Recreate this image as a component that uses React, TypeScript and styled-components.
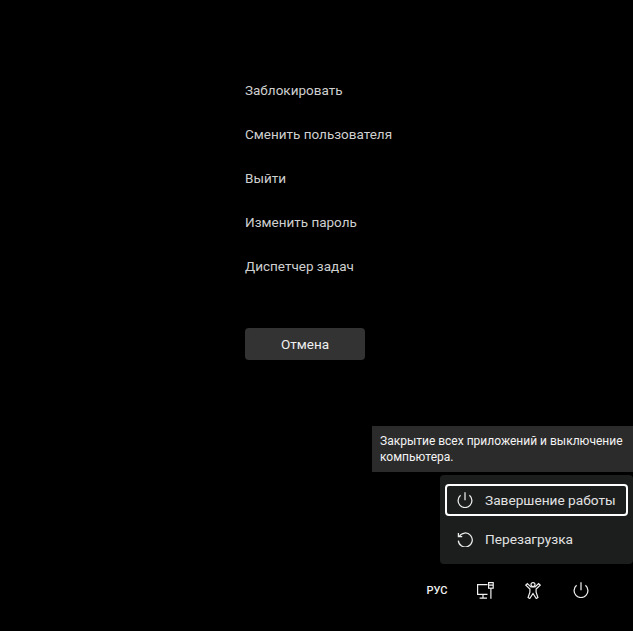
import React from 'react';
import styled, { createGlobalStyle } from 'styled-components';

const GlobalStyle = createGlobalStyle`
  html, body {
    margin: 0;
    padding: 0;
    background: #000;
  }
  body {
    font-family: Roboto, 'Open Sans', sans-serif;
    overflow: hidden;
  }
`;

const PowerIcon = () => (
  <svg width="16" height="16" viewBox="0 0 16 16" fill="none" stroke="#ececec" strokeWidth="1.25">
    <path d="M8 .3v7.9" />
    <path d="M3.6 3.3A6.9 6.9 0 1 0 12.4 3.3" />
  </svg>
);

const RestartIcon = () => (
  <svg width="16" height="16" viewBox="0 0 16 16" fill="none" stroke="#ececec" strokeWidth="1.25">
    <path d="M2.2 5.5A7 7 0 1 1 1.3 9.6" />
    <path d="M1.4 2V5.7H5.2" />
  </svg>
);

const NetworkIcon = () => (
  <svg width="17" height="17" viewBox="0 0 17 17" fill="none" stroke="#f0f0f0" strokeWidth="1.2">
    <path d="M10.5 2.6H.6v9.8h9.9" />
    <path d="M6 12.4v3.4M2.6 16.2H10" />
    <rect x="11.6" y=".6" width="4.6" height="5.6" />
    <path d="M11.6 3.2h4.6M13.9 6.2v10.6" />
  </svg>
);

const AccessibilityIcon = () => (
  <svg width="16" height="17" viewBox="0 0 16 17" fill="none" stroke="#f0f0f0" strokeWidth="1.2">
    <circle cx="8" cy="2.6" r="2" />
    <path d="M2.4 1.6 5.9 4.9H10.1L13.6 1.6 15.2 3.1 11.1 7.1V10.1L12.9 15.5 11.3 16.5 8 11.5 4.7 16.5 3.1 15.5 4.9 10.1V7.1L.8 3.1Z" />
  </svg>
);

const Page = styled.div`
  position: relative;
  display: flex;
  flex-direction: column;
  height: 100vh;
  background: #000;
`;

const Main = styled.main`
  flex: 1;
  display: flex;
  flex-direction: column;
  align-items: flex-start;
  padding: 68px 0 0 245px;
`;

const OptionItem = styled.a`
  display: flex;
  align-items: center;
  height: 44px;
  font-size: 13.5px;
  color: #cfcfcf;
`;

const CancelButton = styled.button`
  width: 120px;
  height: 32px;
  margin-top: 40px;
  padding: 0;
  border: 0;
  border-radius: 4px;
  background: #333;
  color: #f0f0f0;
  font: inherit;
  font-size: 13.5px;
`;

const Tray = styled.footer`
  display: flex;
  justify-content: flex-end;
  padding: 0 28px 17px 0;
`;

const TrayItem = styled.div`
  display: flex;
  align-items: center;
  justify-content: center;
  width: 48px;
  height: 48px;
`;

const Lang = styled.span`
  font-size: 11px;
  font-weight: 500;
  color: #f0f0f0;
`;

const PowerOverlay = styled.div`
  position: absolute;
  right: 0;
  bottom: 67px;
  display: flex;
  flex-direction: column;
  align-items: flex-end;
  gap: 3px;
`;

const Tooltip = styled.div`
  box-sizing: border-box;
  width: 261px;
  height: 46px;
  padding: 7px 8px;
  background: #2b2b2b;
  font-size: 12px;
  line-height: 16px;
  color: #f4f4f4;
`;

const Flyout = styled.div`
  box-sizing: border-box;
  display: flex;
  flex-direction: column;
  gap: 7px;
  width: 193px;
  height: 89px;
  padding: 9px 5px;
  border-radius: 4px;
  background: #1b1e1d;
`;

const FlyoutItem = styled.div<{ $focused?: boolean }>`
  box-sizing: border-box;
  display: flex;
  align-items: center;
  gap: 12px;
  height: 32px;
  padding-left: 10px;
  border: 2px solid ${(p) => (p.$focused ? '#fff' : 'transparent')};
  border-radius: 4px;
  font-size: 13.7px;
  color: #e2e2e2;
`;

const options = [
  'Заблокировать',
  'Сменить пользователя',
  'Выйти',
  'Изменить пароль',
  'Диспетчер задач',
];

const App = () => {
  return (
    <Page>
      <GlobalStyle />
      <Main>
        {options.map((o) => (
          <OptionItem key={o}>{o}</OptionItem>
        ))}
        <CancelButton type="button">Отмена</CancelButton>
      </Main>
      <PowerOverlay>
        <Tooltip>Закрытие всех приложений и выключение компьютера.</Tooltip>
        <Flyout>
          <FlyoutItem $focused>
            <PowerIcon />
            Завершение работы
          </FlyoutItem>
          <FlyoutItem>
            <RestartIcon />
            Перезагрузка
          </FlyoutItem>
        </Flyout>
      </PowerOverlay>
      <Tray>
        <TrayItem>
          <Lang>РУС</Lang>
        </TrayItem>
        <TrayItem>
          <NetworkIcon />
        </TrayItem>
        <TrayItem>
          <AccessibilityIcon />
        </TrayItem>
        <TrayItem>
          <PowerIcon />
        </TrayItem>
      </Tray>
    </Page>
  );
};

export default App;
